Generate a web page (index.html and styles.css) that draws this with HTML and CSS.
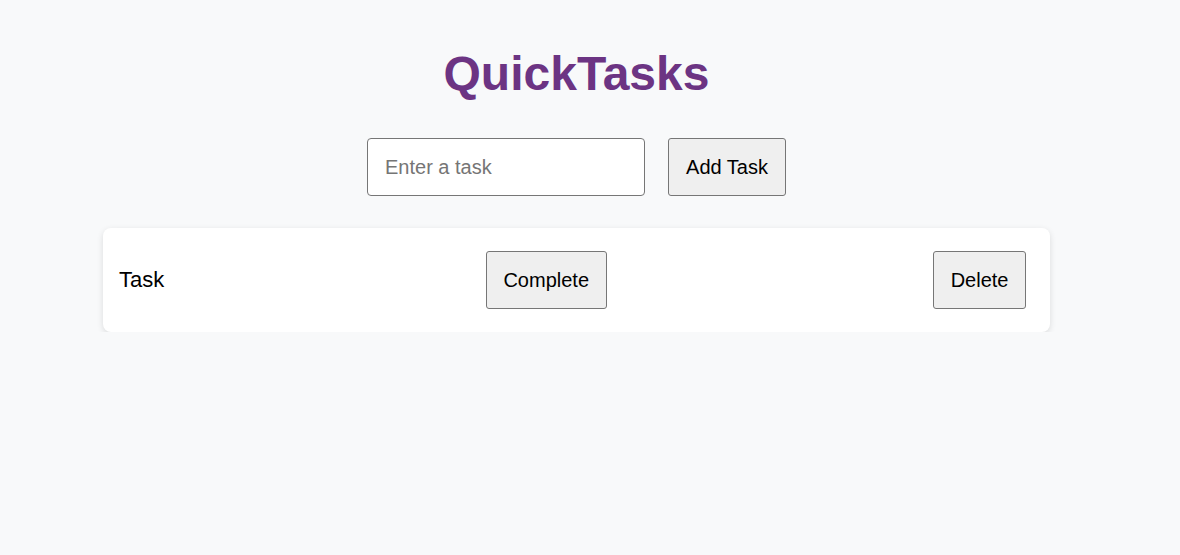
FILE: index.html
```html
<!DOCTYPE html>
<html lang="en">
<head>
<meta charset="utf-8">
<title>QuickTasks</title>
<link rel="stylesheet" href="styles.css">
</head>
<body>
<div class="app">
  <h1 class="title">QuickTasks</h1>
  <div class="add-row">
    <input class="task-input" type="text" placeholder="Enter a task">
    <button class="btn btn-add">Add Task</button>
  </div>
  <ul class="task-list">
    <li class="task-item">
      <span class="task-text">Task</span>
      <button class="btn btn-item">Complete</button>
      <button class="btn btn-item">Delete</button>
    </li>
  </ul>
</div>
</body>
</html>
```

FILE: styles.css
```css
html, body {
  margin: 0;
  padding: 0;
}
body {
  background: #f8f9fa;
  font-family: "Liberation Sans", Arial, sans-serif;
  color: #000;
}
.app {
  width: 1153px;
  display: flex;
  flex-direction: column;
  align-items: center;
}
.title {
  margin: 46px 0 37px;
  font-size: 48px;
  font-weight: bold;
  line-height: 55px;
  color: #6c3483;
}
.add-row {
  display: flex;
  gap: 23px;
  margin-bottom: 32px;
}
.task-input {
  box-sizing: border-box;
  width: 278px;
  height: 58px;
  padding: 0 17px;
  font-family: "Liberation Sans", Arial, sans-serif;
  font-size: 20px;
  border: 1px solid #767676;
  border-radius: 4px;
  background: #fff;
  outline: none;
}
.task-input::placeholder {
  color: #757575;
}
.btn {
  box-sizing: border-box;
  height: 58px;
  padding: 0 16px;
  font-family: "Liberation Sans", Arial, sans-serif;
  font-size: 20px;
  color: #000;
  background: #efefef;
  border: 1px solid #767676;
  border-radius: 3px;
}
.btn-add {
  width: 118px;
  padding: 0;
}
.task-list {
  list-style: none;
  margin: 0;
  padding: 0;
  width: 947px;
}
.task-item {
  box-sizing: border-box;
  display: flex;
  align-items: center;
  justify-content: space-between;
  padding: 23px 16px;
  background: #fff;
  border-radius: 8px;
  box-shadow: 0 2px 6px rgba(0, 0, 0, 0.12);
}
.task-text {
  font-size: 22px;
  padding-right: 3px;
}
.btn-item {
  margin: 0 8px;
  padding: 0 16.5px;
}
```
